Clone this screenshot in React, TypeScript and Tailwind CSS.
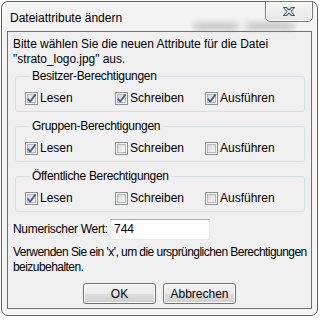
import React from 'react'

const font = "font-['Liberation_Sans',Arial,sans-serif]"

function CheckBox({ checked }: { checked: boolean }) {
  return (
    <svg width="13" height="13" viewBox="0 0 13 13" className="shrink-0">
      <defs>
        <linearGradient id="cbfill" x1="0" y1="0" x2="1" y2="1">
          <stop offset="0" stopColor="#d6d6d6" />
          <stop offset="1" stopColor="#fbfbfb" />
        </linearGradient>
      </defs>
      <rect x="0.5" y="0.5" width="12" height="12" fill="#f4f4f4" stroke="#8e8f8f" />
      <rect x="2.5" y="2.5" width="8" height="8" fill="url(#cbfill)" stroke="#b6b8bb" />
      {checked && (
        <path d="M2.6 6.6 L5.2 9.6 L10.6 2.4" fill="none" stroke="#4a5f8e" strokeWidth="1.8" strokeLinejoin="round" />
      )}
    </svg>
  )
}

function Check({ label, checked }: { label: string; checked: boolean }) {
  return (
    <label className="flex items-center gap-[2px] h-[15px]">
      <CheckBox checked={checked} />
      <span>{label}</span>
    </label>
  )
}

function Group({ title, perms }: { title: string; perms: boolean[] }) {
  const labels = ['Lesen', 'Schreiben', 'Ausführen']
  return (
    <fieldset className="ml-[2px] mr-[6px] border border-[#d5dfe5] rounded-[3px] pl-[9px] pt-[7px] pb-[5px]">
      <legend className="ml-[5px] px-[2px] leading-[15px] tracking-[-0.3px]">{title}</legend>
      <div className="grid grid-cols-[90px_90px_90px]">
        {labels.map((l, i) => (
          <Check key={l} label={l} checked={perms[i]} />
        ))}
      </div>
    </fieldset>
  )
}

function Button({ children }: { children: React.ReactNode }) {
  return (
    <button className="w-[73px] h-[21px] rounded-[3px] border border-[#707070] bg-[linear-gradient(#f2f2f2,#ebebeb_50%,#dddddd_50%,#cfcfcf)] shadow-[inset_0_0_0_1px_#fbfbfb] text-black leading-none">
      {children}
    </button>
  )
}

export default function App() {
  return (
    <div className={`w-[325px] h-[325px] bg-white pt-[1px] pl-[1px] text-[12px] text-black ${font}`}>
      <div className="relative w-[317px] h-[315px] rounded-[7px] border border-[#5a5a5a] bg-[#f3f3f3] shadow-[inset_0_0_0_1px_#fdfdfd] flex flex-col px-[5px] pb-[6px]">
        {/* blurred glass behind title */}
        <div className="absolute left-[192px] top-[21px] w-[44px] h-[6px] bg-[#a8a8a8] blur-[3px] opacity-70" />
        <div className="absolute left-[244px] top-[21px] w-[48px] h-[6px] bg-[#a8a8a8] blur-[3px] opacity-70" />

        {/* title bar */}
        <div className="shrink-0 h-[29px] flex items-center pl-[3px] pt-[2px]">Dateiattribute ändern</div>

        {/* close button */}
        <div className="absolute right-[4px] top-[-1px] w-[48px] h-[21px] rounded-b-[5px] border border-[#7d7d7d] bg-[linear-gradient(#f7f7f7,#e6e6e6)] shadow-[inset_0_0_0_1px_#fafafa] flex items-center justify-center">
          <svg width="14" height="11" viewBox="0 0 14 11">
            <path
              d="M1.5 1.5 H4.5 L7 4 L9.5 1.5 H12.5 L9 5.5 L12.5 9.5 H9.5 L7 7 L4.5 9.5 H1.5 L5 5.5 Z"
              fill="#ffffff"
              stroke="#525a66"
              strokeWidth="1.1"
              strokeLinejoin="round"
            />
          </svg>
        </div>

        {/* client area */}
        <div className="flex-1 min-h-0 border border-[#6f6f6f] bg-[#f0f0f0] pl-[5px] pt-[5px] leading-[15px]">
          <p className="tracking-[-0.05px]">
            Bitte wählen Sie die neuen Attribute für die Datei
            <br />
            "strato_logo.jpg" aus.
          </p>
          <div className="mt-[2px] flex flex-col gap-[7px]">
            <Group title="Besitzer-Berechtigungen" perms={[true, true, true]} />
            <Group title="Gruppen-Berechtigungen" perms={[true, false, false]} />
            <Group title="Öffentliche Berechtigungen" perms={[true, false, false]} />
          </div>
          <div className="mt-[7px] flex items-center">
            <span className="w-[97px] shrink-0 whitespace-nowrap tracking-[-0.3px]">Numerischer Wert:</span>
            <div className="w-[100px] h-[21px] bg-white border border-[#e3e9ef] border-t-[#abadb3] flex items-center pl-[3px]">744</div>
          </div>
          <p className="mt-[5px] whitespace-nowrap tracking-[-0.55px]">
            Verwenden Sie ein 'x', um die ursprünglichen Berechtigungen
            <br />
            beizubehalten.
          </p>
          <div className="mt-[8px] flex justify-center gap-[7px] pr-[5px]">
            <Button>OK</Button>
            <Button>Abbrechen</Button>
          </div>
        </div>
      </div>
    </div>
  )
}
